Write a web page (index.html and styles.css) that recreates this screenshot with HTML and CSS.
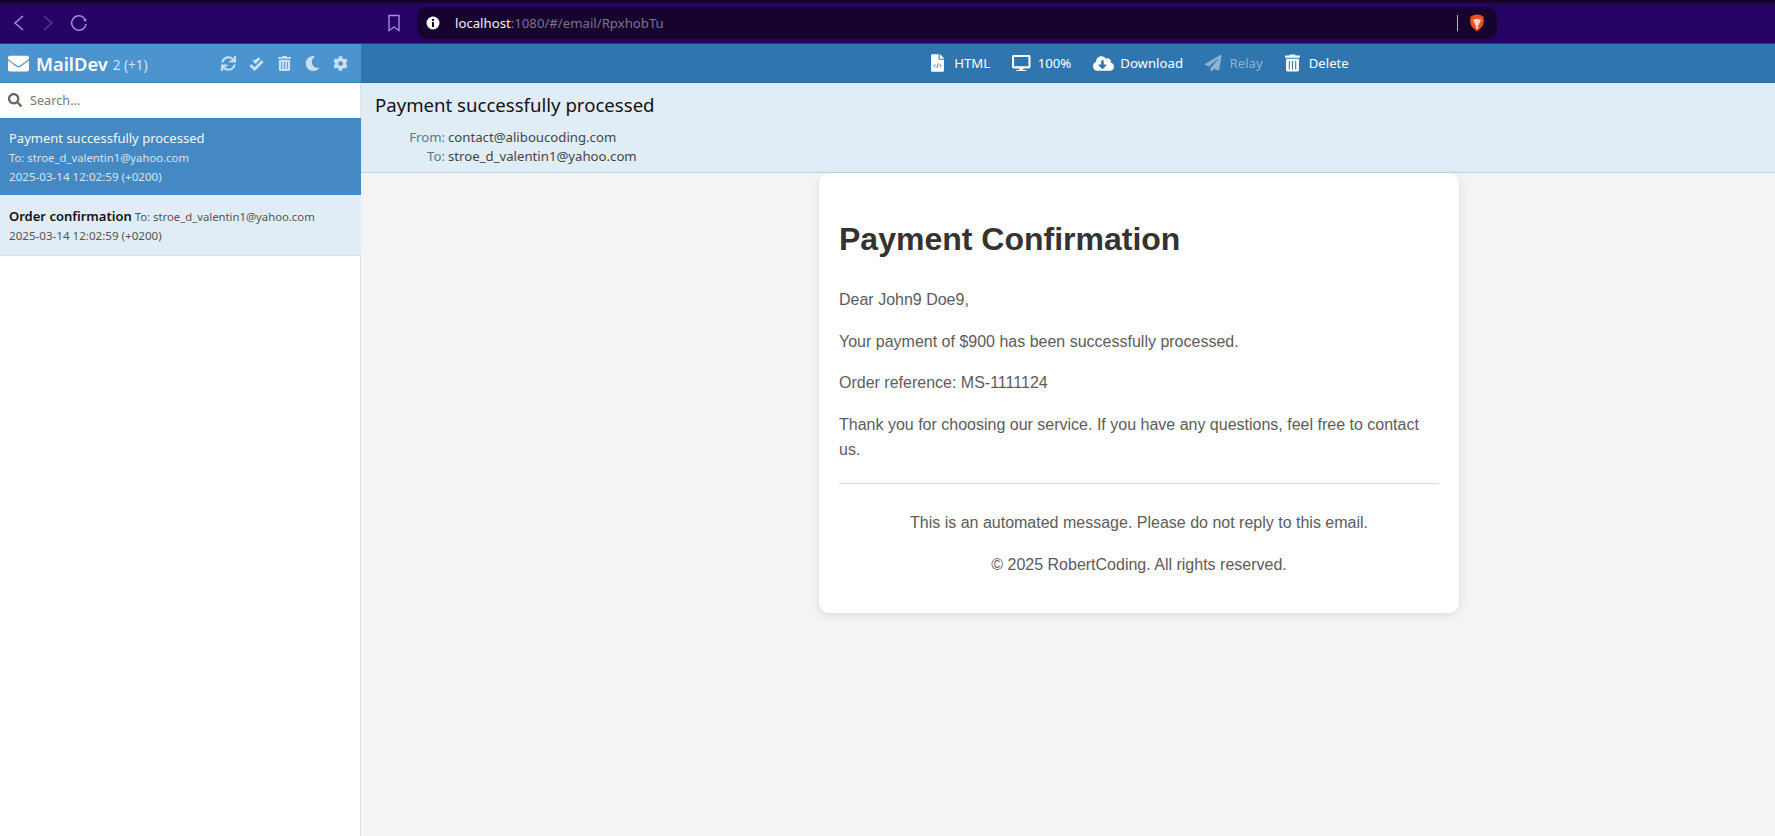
FILE: index.html
```html
<!DOCTYPE html>
<html lang="en">
  <head>
    <meta charset="UTF-8" />
    <meta name="viewport" content="width=device-width, initial-scale=1.0" />
    <title>MailDev</title>
    <link rel="stylesheet" href="styles.css">
  </head>
  <body>
    <!-- Browser chrome -->
    <div class="browser-bar">
      <div class="nav-buttons">
        <svg class="nav-icon" viewBox="0 0 16 20"><polyline points="12,3 4,10 12,17" /></svg>
        <svg class="nav-icon dim" viewBox="0 0 16 20"><polyline points="4,3 12,10 4,17" /></svg>
        <svg class="nav-icon reload" viewBox="0 0 20 20"><path d="M15.5 5.5A7.2 7.2 0 1 0 17 11" /><circle cx="16" cy="7" r="1.4" /></svg>
      </div>
      <svg class="bookmark" viewBox="0 0 14 18"><path d="M2 1.5h10v15l-5-3.5-5 3.5z" /></svg>
      <div class="address-bar">
        <svg class="info-icon" viewBox="0 0 14 14"><circle cx="7" cy="7" r="6.5" fill="#fff" /><rect x="6" y="3" width="2" height="2" fill="#17042e" /><rect x="6" y="6" width="2" height="5" fill="#17042e" /></svg>
        <span class="url"><span class="url-host">localhost</span>:1080/#/email/RpxhobTu</span>
        <span class="address-end">
          <span class="divider"></span>
          <svg class="brave" viewBox="0 0 16 18">
            <path d="M8 .5l3.5.5 1.5 1.2 2 .6-.6 2 .6 2-1.2 5-3.2 3.5L8 17.5l-2.600-2.200-3.200-3.500-1.200-5 .6-2-.6-2 2-.6L4.500 1z" fill="#e8541c" />
            <path d="M4 6l2.500-1h3L12 6l-1.500 3-1 2.500L8 13l-1.500-1.500-1-2.500z" fill="#ffd9c4" />
            <path d="M6.500 13.500L8 12.500l1.500 1-1.500 1.500z" fill="#fff" />
          </svg>
        </span>
      </div>
    </div>

    <div class="app">
      <!-- Left column: mail list -->
      <div class="sidebar">
        <div class="brand-bar">
          <svg class="brand-icon" viewBox="0 0 512 512"><path d="M502.3 190.8c3.9-3.1 9.7-.2 9.7 4.7V400c0 26.5-21.500 48-48 48H48c-26.500 0-48-21.500-48-48V195.600c0-5 5.700-7.800 9.700-4.700 22.400 17.400 52.100 39.500 154.100 113.600 21.100 15.400 56.700 47.800 92.200 47.600 35.700.3 72-32.800 92.300-47.600 102-74.100 131.600-96.300 154-113.700zM256 320c23.200.4 56.600-29.200 73.400-41.400 132.700-96.300 142.800-104.700 173.400-128.700 5.800-4.500 9.200-11.500 9.200-18.900v-19c0-26.500-21.500-48-48-48H48C21.500 64 0 85.500 0 112v19c0 7.400 3.400 14.300 9.200 18.900 30.600 23.900 40.700 32.400 173.400 128.700 16.800 12.200 50.200 41.800 73.400 41.400z" /></svg>
          <span class="brand-name">MailDev</span>
          <span class="brand-count">2 (+1)</span>
          <div class="brand-tools">
            <svg class="tool" viewBox="0 0 512 512"><path d="M440.65 12.57l4 82.77A247.16 247.16 0 0 0 255.83 8C134.73 8 33.91 94.92 12.29 209.82A12 12 0 0 0 24.09 224h49.05a12 12 0 0 0 11.67-9.26 175.91 175.91 0 0 1 317-56.94l-101.46-4.86a12 12 0 0 0-12.57 12v47.41a12 12 0 0 0 12 12H500a12 12 0 0 0 12-12V12a12 12 0 0 0-12-12h-47.37a12 12 0 0 0-11.98 12.57zM255.83 432a175.61 175.61 0 0 1-146-77.8l101.8 4.87a12 12 0 0 0 12.57-12v-47.4a12 12 0 0 0-12-12H12a12 12 0 0 0-12 12V500a12 12 0 0 0 12 12h47.35a12 12 0 0 0 12-12.6l-4.15-82.57A247.17 247.17 0 0 0 255.83 504c121.11 0 221.93-86.92 243.55-201.82a12 12 0 0 0-11.8-14.18h-49.05a12 12 0 0 0-11.67 9.26A175.86 175.86 0 0 1 255.83 432z" /></svg>
            <svg class="tool" viewBox="0 0 16 16"><g class="double-check"><polyline points="1.500,9.500 6,14 14.500,5.500" /><polyline points="5,4.500 7,6.500 11,2.500" /></g></svg>
            <svg class="tool" viewBox="0 0 448 512"><path d="M32 464a48 48 0 0 0 48 48h288a48 48 0 0 0 48-48V128H32zm272-256a16 16 0 0 1 32 0v224a16 16 0 0 1-32 0zm-96 0a16 16 0 0 1 32 0v224a16 16 0 0 1-32 0zm-96 0a16 16 0 0 1 32 0v224a16 16 0 0 1-32 0zM432 32H312l-9.400-18.700A24 24 0 0 0 281.100 0H166.800a23.720 23.720 0 0 0-21.400 13.300L136 32H16A16 16 0 0 0 0 48v32a16 16 0 0 0 16 16h416a16 16 0 0 0 16-16V48a16 16 0 0 0-16-16z" /></svg>
            <svg class="tool" viewBox="0 0 512 512"><path d="M283.211 512c78.962 0 151.079-35.925 198.857-94.792 7.068-8.708-.639-21.430-11.562-19.350-124.203 23.654-238.262-71.576-238.262-196.954 0-72.222 38.662-138.635 101.498-174.394 9.686-5.512 7.250-20.197-3.756-22.230A258.156 258.156 0 0 0 283.211 0c-141.309 0-256 114.511-256 256 0 141.309 114.511 256 256 256z" /></svg>
            <svg class="tool" viewBox="0 0 512 512"><path d="M487.400 315.700l-42.600-24.600c4.300-23.200 4.300-47 0-70.200l42.600-24.600c4.900-2.800 7.100-8.600 5.500-14-11.100-35.600-30-67.800-54.700-94.600-3.800-4.100-10-5.100-14.800-2.300L380.800 110c-17.900-15.400-38.500-27.300-60.800-35.100V25.800c0-5.600-3.900-10.500-9.400-11.700-36.700-8.200-74.300-7.800-109.200 0-5.500 1.200-9.400 6.100-9.400 11.700V75c-22.200 7.900-42.800 19.800-60.800 35.100L88.700 85.500c-4.900-2.800-11-1.900-14.800 2.300-24.700 26.700-43.600 58.900-54.700 94.600-1.700 5.400.6 11.200 5.500 14L67.300 221c-4.300 23.200-4.300 47 0 70.200l-42.600 24.600c-4.900 2.800-7.100 8.600-5.500 14 11.100 35.600 30 67.800 54.700 94.600 3.800 4.100 10 5.100 14.800 2.300l42.600-24.600c17.900 15.400 38.500 27.300 60.800 35.100v49.200c0 5.600 3.900 10.500 9.400 11.700 36.700 8.200 74.300 7.800 109.200 0 5.500-1.200 9.400-6.100 9.400-11.700v-49.200c22.200-7.900 42.800-19.800 60.800-35.100l42.600 24.600c4.900 2.800 11 1.900 14.800-2.300 24.700-26.700 43.600-58.900 54.700-94.600 1.500-5.500-.7-11.300-5.600-14.100zM256 336c-44.100 0-80-35.900-80-80s35.900-80 80-80 80 35.900 80 80-35.900 80-80 80z" /></svg>
          </div>
        </div>

        <div class="search">
          <svg class="search-icon" viewBox="0 0 512 512"><path d="M505 442.700L405.300 343c-4.500-4.500-10.600-7-17-7H372c27.600-35.300 44-79.700 44-128C416 93.100 322.900 0 208 0S0 93.100 0 208s93.100 208 208 208c48.300 0 92.700-16.400 128-44v16.300c0 6.400 2.500 12.500 7 17l99.700 99.700c9.400 9.400 24.600 9.400 33.900 0l28.300-28.300c9.400-9.400 9.400-24.600.1-34zM208 336c-70.700 0-128-57.200-128-128 0-70.700 57.200-128 128-128 70.700 0 128 57.200 128 128 0 70.700-57.200 128-128 128z" /></svg>
          <span class="search-text">Search...</span>
        </div>

        <div class="mail-item active">
          <div class="mail-subject">Payment successfully processed</div>
          <div class="mail-to">To: stroe_d_valentin1@yahoo.com</div>
          <div class="mail-date">2025-03-14 12:02:59 (+0200)</div>
        </div>
        <div class="mail-item">
          <div><span class="mail-subject strong">Order confirmation</span> <span class="mail-to">To: stroe_d_valentin1@yahoo.com</span></div>
          <div class="mail-date">2025-03-14 12:02:59 (+0200)</div>
        </div>
      </div>

      <!-- Right column: open mail -->
      <div class="main">
        <div class="toolbar">
          <div class="tool-item">
            <svg class="tool-icon icon-file" viewBox="0 0 384 512"><path d="M384 121.941V128H256V0h6.059c6.365 0 12.470 2.529 16.971 7.029l97.941 97.941A24.005 24.005 0 0 1 384 121.941zM248 160c-13.200 0-24-10.800-24-24V0H24C10.745 0 0 10.745 0 24v464c0 13.255 10.745 24 24 24h336c13.255 0 24-10.745 24-24V160H248z" /><g class="code-mark"><polyline points="130,290 85,335 130,380" /><polyline points="254,290 299,335 254,380" /><line x1="215" y1="270" x2="169" y2="400" /></g></svg>
            <span>HTML</span>
          </div>
          <div class="tool-item">
            <svg class="tool-icon icon-desktop" viewBox="0 0 576 512"><path d="M528 0H48C21.500 0 0 21.500 0 48v320c0 26.500 21.500 48 48 48h192l-16 48h-72c-13.300 0-24 10.700-24 24s10.700 24 24 24h272c13.300 0 24-10.700 24-24s-10.700-24-24-24h-72l-16-48h192c26.500 0 48-21.500 48-48V48c0-26.500-21.500-48-48-48zm-16 352H64V64h448v288z" /></svg>
            <span>100%</span>
          </div>
          <div class="tool-item">
            <svg class="tool-icon icon-cloud" viewBox="0 0 640 512"><path d="M537.600 226.600c4.100-10.700 6.400-22.400 6.400-34.600 0-53-43-96-96-96-19.700 0-38.100 6-53.300 16.200C367 64.200 315.300 32 256 32c-88.400 0-160 71.600-160 160 0 2.700.1 5.400.2 8.100C40.200 219.800 0 273.200 0 336c0 79.500 64.500 144 144 144h368c70.700 0 128-57.300 128-128 0-61.900-44-113.600-102.400-125.400zm-132.900 88.700L299.300 420.700c-6.200 6.200-16.400 6.200-22.600 0L171.300 315.300c-10.100-10.100-2.900-27.300 11.300-27.300H248V176c0-8.800 7.200-16 16-16h48c8.800 0 16 7.200 16 16v112h65.400c14.200 0 21.400 17.200 11.300 27.300z" /></svg>
            <span>Download</span>
          </div>
          <div class="tool-item disabled">
            <svg class="tool-icon icon-plane" viewBox="0 0 512 512"><path d="M476 3.200L12.500 270.600c-18.100 10.400-15.800 35.600 2.200 43.200L121 358.400l287.300-253.200c5.500-4.900 13.300 2.600 8.600 8.300L176 407v80.500c0 23.600 28.500 32.900 42.500 15.800L282 426l124.600 52.200c14.200 6 30.400-2.900 33-18.200l72-432C515 7.800 493.300-6.800 476 3.200z" /></svg>
            <span>Relay</span>
          </div>
          <div class="tool-item">
            <svg class="tool-icon icon-trash" viewBox="0 0 448 512"><path d="M32 464a48 48 0 0 0 48 48h288a48 48 0 0 0 48-48V128H32zm272-256a16 16 0 0 1 32 0v224a16 16 0 0 1-32 0zm-96 0a16 16 0 0 1 32 0v224a16 16 0 0 1-32 0zm-96 0a16 16 0 0 1 32 0v224a16 16 0 0 1-32 0zM432 32H312l-9.400-18.700A24 24 0 0 0 281.100 0H166.800a23.720 23.720 0 0 0-21.400 13.300L136 32H16A16 16 0 0 0 0 48v32a16 16 0 0 0 16 16h416a16 16 0 0 0 16-16V48a16 16 0 0 0-16-16z" /></svg>
            <span>Delete</span>
          </div>
        </div>

        <div class="mail-meta">
          <div class="meta-subject">Payment successfully processed</div>
          <div class="meta-row"><span class="meta-label">From:</span> <span>contact@aliboucoding.com</span></div>
          <div class="meta-row"><span class="meta-label">To:</span> <span>stroe_d_valentin1@yahoo.com</span></div>
        </div>

        <div class="mail-body">
          <div class="card">
            <h1>Payment Confirmation</h1>
            <p>Dear John9 Doe9,</p>
            <p>Your payment of $900 has been successfully processed.</p>
            <p>Order reference: MS-1111124</p>
            <p>Thank you for choosing our service. If you have any questions, feel free to contact us.</p>
            <div class="card-footer">
              <p>This is an automated message. Please do not reply to this email.</p>
              <p>© 2025 RobertCoding. All rights reserved.</p>
            </div>
          </div>
        </div>
      </div>
    </div>
  </body>
</html>
```

FILE: styles.css
```css
* {
  box-sizing: border-box;
}
html,
body {
  height: 100%;
}
body {
  margin: 0;
  display: flex;
  flex-direction: column;
  overflow: hidden;
  font-family: "Noto Sans", sans-serif;
  background: #fff;
}

/* browser chrome */
.browser-bar {
  height: 44px;
  flex: none;
  display: flex;
  align-items: center;
  background: #260264;
  border-top: 3px solid #14032b;
  border-bottom: 1px solid #3d2a86;
}
.nav-buttons {
  width: 387px;
  flex: none;
  display: flex;
  align-items: center;
  gap: 13px;
  padding-left: 11px;
}
.nav-icon {
  width: 16px;
  height: 20px;
  fill: none;
  stroke: #a78bea;
  stroke-width: 1.5;
}
.nav-icon.dim {
  stroke: #52389a;
}
.nav-icon.reload {
  width: 20px;
}
.nav-icon.reload circle {
  fill: #a78bea;
  stroke: none;
}
.bookmark {
  width: 14px;
  height: 18px;
  flex: none;
  fill: none;
  stroke: #a78bea;
  stroke-width: 1.4;
}
.address-bar {
  width: 1080px;
  height: 32px;
  margin-left: 16px;
  flex: none;
  display: flex;
  align-items: center;
  padding: 0 11px 0 9px;
  background: #17042e;
  border-radius: 10px;
}
.info-icon {
  width: 14px;
  height: 14px;
  flex: none;
}
.url {
  margin-left: 15px;
  font-size: 13.2px;
  color: #7d7091;
}
.url-host {
  color: #f4f2f7;
}
.address-end {
  margin-left: auto;
  display: flex;
  align-items: center;
  gap: 11px;
}
.divider {
  width: 1px;
  height: 16px;
  background: #b9b3c4;
}
.brave {
  width: 16px;
  height: 18px;
  margin-right: 1px;
}

/* app layout */
.app {
  flex: 1;
  display: flex;
  min-height: 0;
}
.sidebar {
  width: 361px;
  flex: none;
  border-right: 1px solid #dde1e5;
  background: #fff;
}
.main {
  flex: 1;
  display: flex;
  flex-direction: column;
  min-width: 0;
}

/* sidebar */
.brand-bar {
  height: 39px;
  margin-right: -1px;
  display: flex;
  align-items: center;
  padding: 0 13px 0 8px;
  background: #4b94d0;
  border-bottom: 1px solid #3f7fb2;
  color: #fff;
}
.brand-icon {
  width: 21px;
  height: 21px;
  fill: #fff;
  flex: none;
}
.brand-name {
  margin-left: 7px;
  font-size: 18.3px;
  font-weight: 600;
}
.brand-count {
  margin-left: 5px;
  margin-top: 3px;
  font-size: 13.5px;
  color: #cfe3f3;
}
.brand-tools {
  margin-left: auto;
  display: flex;
  align-items: center;
  gap: 13px;
}
.tool {
  width: 15px;
  height: 15px;
  fill: #c9e0f2;
}
.double-check {
  fill: none;
  stroke: #c9e0f2;
  stroke-width: 3;
}
.search {
  height: 35px;
  display: flex;
  align-items: center;
  padding: 0 0 1px 8px;
  background: #fff;
}
.search-icon {
  width: 14px;
  height: 14px;
  fill: #6b6560;
  flex: none;
}
.search-text {
  margin-left: 8px;
  font-size: 12.7px;
  color: #777;
}
.mail-item {
  margin-right: -1px;
  padding: 12px 9px 0;
  background: #e0edf7;
  border-bottom: 1px solid #d3e2ee;
  height: 61px;
  font-size: 11.6px;
  color: #555;
}
.mail-item.active {
  height: 77px;
  padding-top: 11px;
  background: #4489c3;
  border-bottom: 0;
  color: #d3e5f3;
}
.mail-item > div {
  line-height: 19px;
}
.mail-subject {
  font-size: 13px;
}
.active .mail-subject {
  color: #f1f7fc;
}
.mail-subject.strong {
  font-weight: 600;
  color: #111;
}
.mail-to {
  font-size: 11.3px;
}

/* toolbar */
.toolbar {
  height: 39px;
  flex: none;
  display: flex;
  align-items: center;
  justify-content: center;
  gap: 22px;
  padding-left: 144px;
  background: #2f76ae;
  border-bottom: 1px solid #2a6a9d;
  color: #fff;
  font-size: 13.2px;
}
.tool-item {
  display: flex;
  align-items: center;
}
.tool-item.disabled {
  color: #8fb3d2;
}
.tool-icon {
  fill: currentColor;
  flex: none;
}
.icon-file {
  width: 13px;
  height: 18px;
  margin-right: 10px;
}
.icon-desktop {
  width: 18.5px;
  height: 16.5px;
  margin-right: 7px;
}
.icon-cloud {
  width: 21px;
  height: 17px;
  margin-right: 6px;
}
.icon-plane {
  width: 16.5px;
  height: 16.5px;
  margin-right: 8px;
}
.icon-trash {
  width: 15px;
  height: 18px;
  margin-right: 9px;
}
.code-mark {
  fill: none;
  stroke: #2f76ae;
  stroke-width: 26;
}

/* mail header */
.mail-meta {
  height: 90px;
  flex: none;
  padding: 9px 14px 0;
  background: #e0edf7;
  border-bottom: 1px solid #bcd4e6;
}
.meta-subject {
  font-size: 18.6px;
  line-height: 26px;
  margin-bottom: 10px;
  color: #111;
}
.meta-row {
  display: flex;
  gap: 3px;
  font-size: 13.2px;
  line-height: 19px;
  color: #444;
}
.meta-label {
  width: 70px;
  text-align: right;
  color: #5b7890;
}

/* rendered mail */
.mail-body {
  flex: 1;
  background: #f4f4f4;
  padding-left: 458px;
}
.card {
  width: 640px;
  padding: 20px;
  background: #fff;
  border-radius: 10px;
  box-shadow: 0 2px 10px rgba(0, 0, 0, 0.1);
  font-family: "Liberation Sans", Arial, sans-serif;
  font-size: 16px;
  line-height: 1.6;
  color: #5c5c5c;
}
.card h1 {
  margin: 21.44px 0;
  font-size: 32px;
  color: #333;
}
.card p {
  margin: 16px 0;
}
.card-footer {
  margin-top: 20px;
  padding-top: 10px;
  border-top: 1px solid #ddd;
  text-align: center;
}
```
